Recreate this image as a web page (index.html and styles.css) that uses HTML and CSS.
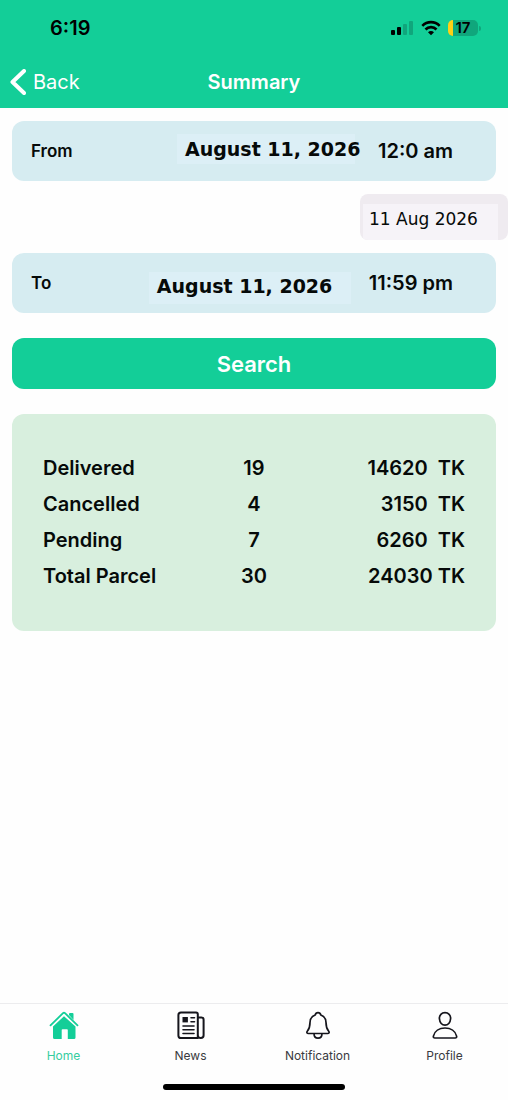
FILE: index.html
```html
<!DOCTYPE html>
<html lang="en">
<head>
<meta charset="utf-8">
<meta name="viewport" content="width=device-width, initial-scale=1">
<title>Summary</title>
<link rel="stylesheet" href="styles.css">
</head>
<body class="app">
<header class="header">
  <div class="status">
    <span class="clock">6:19</span>
    <div class="indicators">
      <svg class="signal" viewBox="0 0 23 16" aria-hidden="true">
        <rect x="0" y="10" width="4" height="5" rx="1"/>
        <rect x="6" y="7" width="4" height="8" rx="1"/>
        <rect class="faint" x="12" y="4" width="4" height="11" rx="1"/>
        <rect class="faint" x="18" y="1" width="4" height="14" rx="1"/>
      </svg>
      <svg class="wifi" viewBox="0 0 20 16" aria-hidden="true">
        <path d="M1.3 5.8C6.2.9 13.8.9 18.7 5.8" fill="none" stroke="#000" stroke-width="2.6"/>
        <path d="M4.5 9.500c3-3.200 8-3.200 11 0" fill="none" stroke="#000" stroke-width="2.600"/>
        <path d="M7 12.200c1.700-1.600 4.300-1.600 6 0L10 15.300z"/>
      </svg>
      <span class="battery"><span class="cell"><span class="level">17</span></span><span class="cap"></span></span>
    </div>
  </div>
  <nav class="navbar" aria-label="Page">
    <a class="back" href="#back">
      <svg class="chevron" viewBox="0 0 16 26" aria-hidden="true"><path d="M14 2 2.500 13 14 24"/></svg>
      Back
    </a>
    <h1 class="title">Summary</h1>
  </nav>
</header>

<main class="content">
  <div class="field">
    <span class="field-label" id="from">From</span>
    <button class="date date-from" type="button" aria-describedby="from">August 11, 2026</button>
    <button class="time" type="button" aria-describedby="from">12:0 am</button>
  </div>
  <button class="picker" type="button"><span class="picker-value">11 Aug 2026</span></button>
  <div class="field">
    <span class="field-label" id="to">To</span>
    <button class="date date-to" type="button" aria-describedby="to">August 11, 2026</button>
    <button class="time" type="button" aria-describedby="to">11:59 pm</button>
  </div>
  <button class="search" type="button">Search</button>
  <section class="totals">
    <table class="table">
      <tbody>
        <tr><th scope="row">Delivered</th><td class="count">19</td><td class="amount">14620&nbsp; TK</td></tr>
        <tr><th scope="row">Cancelled</th><td class="count">4</td><td class="amount">3150&nbsp; TK</td></tr>
        <tr><th scope="row">Pending</th><td class="count">7</td><td class="amount">6260&nbsp; TK</td></tr>
        <tr><th scope="row">Total Parcel</th><td class="count">30</td><td class="amount">24030 TK</td></tr>
      </tbody>
    </table>
  </section>
</main>

<footer class="footer">
  <nav class="tabs" aria-label="Main">
    <a class="tab active" href="#home">
      <svg class="icon" viewBox="0 0 30 30" aria-hidden="true">
        <path class="solid" d="M15 6.200 26.500 16.500V27.500q0 1.500-1.500 1.500H18.800V20q0-.8-.8-.8h-4.500q-.8 0-.8.8v9H5.500Q4 29 4 27.500V16.500z"/>
        <path d="M1.500 15.300 14 3.200q1-1 2 0L28.500 15.300" stroke-width="1.800"/>
        <path class="solid" d="M20 5V4q0-1 1-1h2.500q1 0 1 1v6z"/>
      </svg>
      Home
    </a>
    <a class="tab" href="#news">
      <svg class="icon" viewBox="0 0 30 30" aria-hidden="true">
        <path d="M5 2.500h15q1.800 0 1.800 1.800V28H5q-2.600 0-2.600-2.600V5q0-2.500 2.600-2.500zM21.800 7.500h3.600q2.200 0 2.200 2.200v15.500q0 2.800-2.800 2.800t-3-2.800"/>
        <path class="solid" d="M6.500 7h5.400v5.400H6.500z"/>
        <path d="M15 7.700h3.500M15 11.700h3.500M7 16h11M7 19.700h11M7 23.500h11" stroke-width="1.600"/>
      </svg>
      News
    </a>
    <a class="tab" href="#notification">
      <svg class="icon" viewBox="0 0 30 30" aria-hidden="true">
        <path d="M15 2.700c-1.700 0-2.500.9-2.800 2.300C8.700 6.400 7 9.200 7 12.500c0 5-.9 6.700-2.700 8.800-.9 1.100-.2 2.200 1 2.200h19.400c1.200 0 1.900-1.100 1-2.200C23.900 19.200 23 17.500 23 12.500c0-3.300-1.700-6.100-5.200-7.500-.3-1.400-1.100-2.300-2.800-2.300zM11 23.500c0 6.200 8 6.200 8 0" stroke-width="1.700"/>
      </svg>
      Notification
    </a>
    <a class="tab" href="#profile">
      <svg class="icon" viewBox="0 0 30 30" aria-hidden="true">
        <path d="M15 2.700c3.400 0 5.800 2.500 5.600 5.900-.3 3.900-2.700 6.600-5.600 6.600s-5.300-2.700-5.600-6.600C9.200 5.200 11.600 2.700 15 2.700zM15 18c-5.600 0-10.500 2.900-11.600 8.200-.2 1.100.4 1.800 1.400 1.800h20.400c1 0 1.600-.7 1.400-1.800C25.500 20.900 20.600 18 15 18z" stroke-width="1.700"/>
      </svg>
      Profile
    </a>
  </nav>
  <div class="home-bar"></div>
</footer>
</body>
</html>
```

FILE: styles.css
```css
* {
  box-sizing: border-box;
}

.app {
  margin: 0;
  min-height: 100vh;
  display: flex;
  flex-direction: column;
  background: #fefefe;
  color: #060a09;
  font-family: Inter, "Liberation Sans", sans-serif;
}

button {
  border: 0;
  padding: 0;
  margin: 0;
  background: none;
  color: inherit;
  font: inherit;
}

a {
  color: inherit;
  text-decoration: none;
}

.header {
  background: #13ce98;
}

.status {
  height: 56px;
  padding: 0 27px 0 50px;
  display: flex;
  align-items: center;
  justify-content: space-between;
  color: #000;
}

.clock {
  font-size: 20px;
  font-weight: 600;
}

.indicators {
  display: flex;
  align-items: center;
  gap: 7px;
}

.signal {
  width: 23px;
  height: 16px;
}

.faint {
  fill: #10a67c;
}

.wifi {
  width: 20px;
  height: 16px;
}

.battery {
  display: flex;
  align-items: center;
  gap: 1px;
}

.cell {
  width: 30px;
  height: 16px;
  border-radius: 5px;
  background: linear-gradient(to right, #fdd116 5px, #10a67c 5px);
}

.level {
  display: block;
  text-align: center;
  font-size: 15px;
  line-height: 16px;
  font-weight: 600;
}

.cap {
  width: 2px;
  height: 5px;
  border-radius: 0 2px 2px 0;
  background: #10a67c;
}

.navbar {
  height: 52px;
  padding: 0 10px;
  display: grid;
  grid-template-columns: 1fr auto 1fr;
  align-items: center;
  color: #fff;
}

.back {
  display: flex;
  align-items: center;
  gap: 7px;
  font-size: 20px;
}

.chevron {
  width: 16px;
  height: 26px;
  fill: none;
  stroke: #fff;
  stroke-width: 4;
  stroke-linecap: round;
  stroke-linejoin: round;
}

.title {
  margin: 0;
  font-size: 20px;
  font-weight: 600;
}

.content {
  flex: 1;
  padding: 13px 12px;
  display: flex;
  flex-direction: column;
}

.field {
  height: 60px;
  padding: 0 43px 0 19px;
  display: flex;
  align-items: center;
  border-radius: 12px;
  background: #d6ecf1;
}

.field-label {
  flex: 1;
  font-size: 17px;
  font-weight: 600;
}

.date {
  text-align: left;
  white-space: nowrap;
  background: #dceff6;
  font: bold 19px/28px "DejaVu Sans", sans-serif;
}

.date-from {
  width: 178px;
  height: 30px;
  margin: 0 23px 4px 0;
  padding-left: 8px;
}

.date-to {
  width: 202px;
  height: 32px;
  margin: 10px 18px 0 0;
  padding: 0 0 4px 8px;
}

.time {
  font-size: 20px;
  font-weight: 600;
  white-space: nowrap;
}

.picker {
  align-self: flex-end;
  width: 148px;
  height: 46px;
  margin: 13px -12px 13px 0;
  padding: 10px 10px 0 3px;
  border-radius: 8px;
  background: #efebf0;
  overflow: hidden;
}

.picker-value {
  display: block;
  height: 36px;
  padding-left: 6px;
  text-align: left;
  background: #f6f3f8;
  font: 17px/30px "DejaVu Sans", sans-serif;
}

.search {
  height: 51px;
  margin: 25px 0;
  border-radius: 12px;
  background: #13ce98;
  color: #fff;
  font-size: 22px;
  font-weight: 600;
}

.totals {
  padding: 36px 31px 37px;
  border-radius: 12px;
  background: #d8efde;
}

.table {
  width: 100%;
  table-layout: fixed;
  border-collapse: collapse;
  font-size: 20px;
  line-height: 36px;
  font-weight: 600;
}

.table th,
.table td {
  padding: 0;
  font-weight: 600;
  white-space: nowrap;
}

.table th {
  text-align: left;
}

.count {
  text-align: center;
}

.amount {
  text-align: right;
}

.footer {
  border-top: 1px solid #ececee;
  padding-bottom: 10px;
}

.tabs {
  display: grid;
  grid-template-columns: repeat(4, 1fr);
  padding: 6px 0 20px;
}

.tab {
  display: flex;
  flex-direction: column;
  align-items: center;
  gap: 8px;
  color: #3a3a40;
  font-size: 12px;
  line-height: 16px;
}

.active {
  color: #35cd9f;
}

.icon {
  width: 30px;
  height: 30px;
  fill: none;
  stroke: #15151c;
  stroke-width: 2;
  stroke-linecap: round;
  stroke-linejoin: round;
}

.solid {
  fill: #15151c;
  stroke: none;
}

.active .icon {
  stroke: #13ce98;
}

.active .solid {
  fill: #13ce98;
}

.home-bar {
  width: 36%;
  height: 6px;
  margin: 0 auto;
  border-radius: 3px;
  background: #000;
}
```
